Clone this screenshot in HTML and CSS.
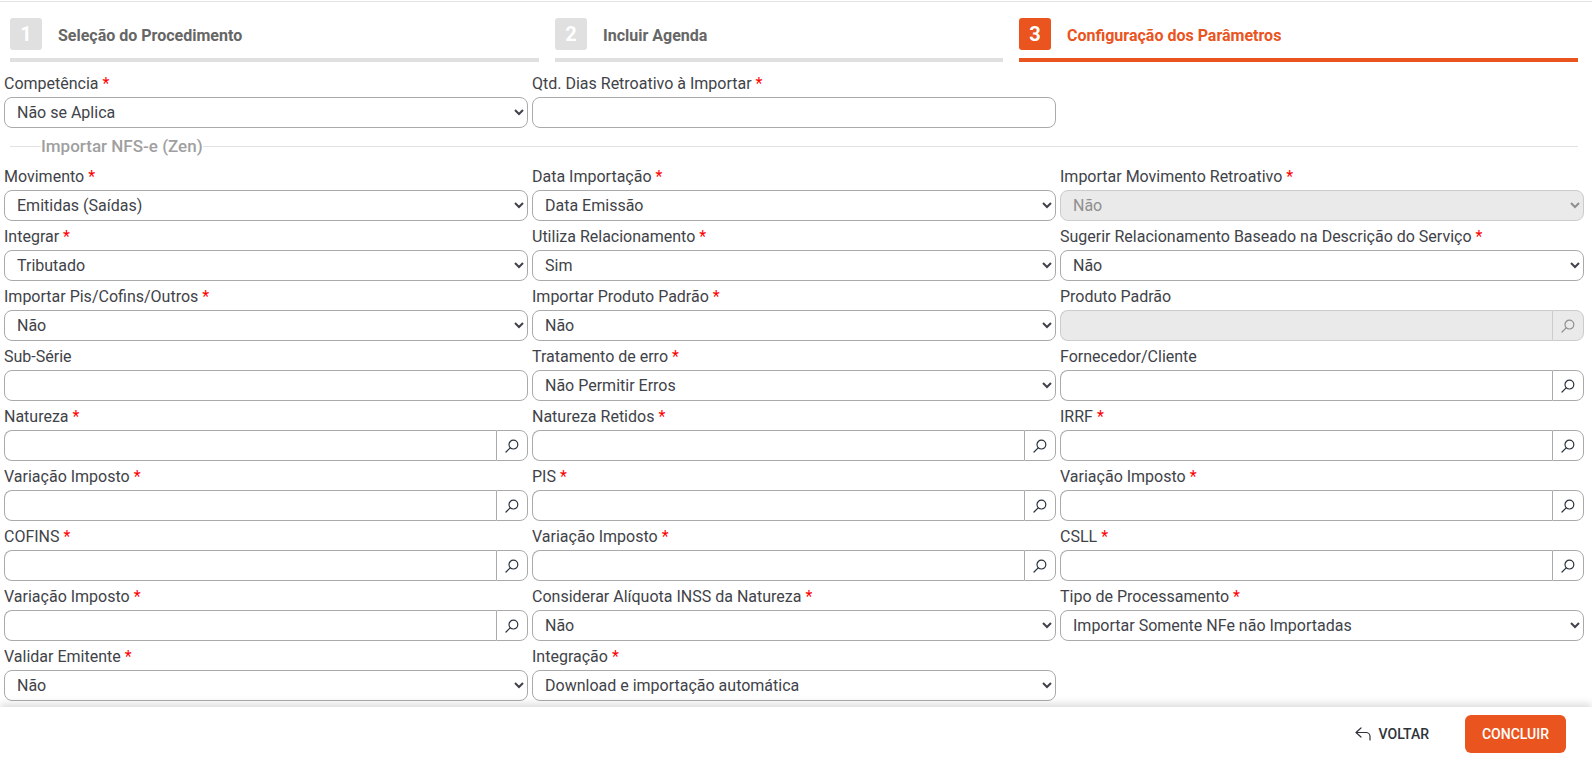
FILE: index.html
```html
<!DOCTYPE html>
<html lang="pt-BR">
<head>
<meta charset="utf-8">
<title>Configuração dos Parâmetros</title>
<link rel="stylesheet" href="styles.css">
</head>
<body>
<svg class="defs" width="0" height="0" aria-hidden="true"><defs>
<symbol id="lupa" viewBox="0 0 14 14"><circle cx="8.4" cy="5.6" r="4.4" fill="none" stroke="currentColor" stroke-width="1.2"/><path d="M5.2 8.8 1 13" fill="none" stroke="currentColor" stroke-width="1.2" stroke-linecap="round"/></symbol>
</defs></svg>
<div class="page">
  <main class="content">
    <nav class="steps">
      <div class="step"><span class="num">1</span><span class="title">Seleção do Procedimento</span></div>
      <div class="step"><span class="num">2</span><span class="title">Incluir Agenda</span></div>
      <div class="step active"><span class="num">3</span><span class="title">Configuração dos Parâmetros</span></div>
    </nav>
    <div class="grid first">
      <div class="field"><label>Competência <b>*</b></label><select><option>Não se Aplica</option></select></div>
      <div class="field"><label>Qtd. Dias Retroativo à Importar <b>*</b></label><input type="text"></div>
    </div>
    <div class="legend"><span>Importar NFS-e (Zen)</span></div>
    <div class="grid">
      <div class="field"><label>Movimento <b>*</b></label><select><option>Emitidas (Saídas)</option></select></div>
      <div class="field"><label>Data Importação <b>*</b></label><select><option>Data Emissão</option></select></div>
      <div class="field"><label>Importar Movimento Retroativo <b>*</b></label><select disabled><option>Não</option></select></div>

      <div class="field"><label>Integrar <b>*</b></label><select><option>Tributado</option></select></div>
      <div class="field"><label>Utiliza Relacionamento <b>*</b></label><select><option>Sim</option></select></div>
      <div class="field"><label>Sugerir Relacionamento Baseado na Descrição do Serviço <b>*</b></label><select><option>Não</option></select></div>

      <div class="field"><label>Importar Pis/Cofins/Outros <b>*</b></label><select><option>Não</option></select></div>
      <div class="field"><label>Importar Produto Padrão <b>*</b></label><select><option>Não</option></select></div>
      <div class="field"><label>Produto Padrão</label><div class="lookup off"><input type="text" disabled><button type="button" disabled><svg><use href="#lupa"/></svg></button></div></div>

      <div class="field"><label>Sub-Série</label><input type="text"></div>
      <div class="field"><label>Tratamento de erro <b>*</b></label><select><option>Não Permitir Erros</option></select></div>
      <div class="field"><label>Fornecedor/Cliente</label><div class="lookup"><input type="text"><button type="button"><svg><use href="#lupa"/></svg></button></div></div>

      <div class="field"><label>Natureza <b>*</b></label><div class="lookup"><input type="text"><button type="button"><svg><use href="#lupa"/></svg></button></div></div>
      <div class="field"><label>Natureza Retidos <b>*</b></label><div class="lookup"><input type="text"><button type="button"><svg><use href="#lupa"/></svg></button></div></div>
      <div class="field"><label>IRRF <b>*</b></label><div class="lookup"><input type="text"><button type="button"><svg><use href="#lupa"/></svg></button></div></div>

      <div class="field"><label>Variação Imposto <b>*</b></label><div class="lookup"><input type="text"><button type="button"><svg><use href="#lupa"/></svg></button></div></div>
      <div class="field"><label>PIS <b>*</b></label><div class="lookup"><input type="text"><button type="button"><svg><use href="#lupa"/></svg></button></div></div>
      <div class="field"><label>Variação Imposto <b>*</b></label><div class="lookup"><input type="text"><button type="button"><svg><use href="#lupa"/></svg></button></div></div>

      <div class="field"><label>COFINS <b>*</b></label><div class="lookup"><input type="text"><button type="button"><svg><use href="#lupa"/></svg></button></div></div>
      <div class="field"><label>Variação Imposto <b>*</b></label><div class="lookup"><input type="text"><button type="button"><svg><use href="#lupa"/></svg></button></div></div>
      <div class="field"><label>CSLL <b>*</b></label><div class="lookup"><input type="text"><button type="button"><svg><use href="#lupa"/></svg></button></div></div>

      <div class="field"><label>Variação Imposto <b>*</b></label><div class="lookup"><input type="text"><button type="button"><svg><use href="#lupa"/></svg></button></div></div>
      <div class="field"><label>Considerar Alíquota INSS da Natureza <b>*</b></label><select><option>Não</option></select></div>
      <div class="field"><label>Tipo de Processamento <b>*</b></label><select><option>Importar Somente NFe não Importadas</option></select></div>

      <div class="field"><label>Validar Emitente <b>*</b></label><select><option>Não</option></select></div>
      <div class="field"><label>Integração <b>*</b></label><select><option>Download e importação automática</option></select></div>
    </div>
  </main>
  <footer class="actions">
    <button type="button" class="back"><svg viewBox="0 0 16 14" width="16" height="14"><path d="M6 1 1 5.5 6 10M1 5.5h10a4 4 0 0 1 4 4V13" fill="none" stroke="currentColor" stroke-width="1.2" stroke-linecap="round" stroke-linejoin="round"/></svg>VOLTAR</button>
    <button type="button" class="done">CONCLUIR</button>
  </footer>
</div>
</body>
</html>
```
FILE: styles.css
```css
* { box-sizing: border-box; }
html, body { margin: 0; height: 100%; background: #fff; overflow: hidden; }
body { font-family: Roboto, "Liberation Sans", sans-serif; color: #3f4349; }
.defs { position: absolute; }
.page { height: 760px; display: flex; flex-direction: column; padding-top: 1px; }
.content { flex: 1; min-height: 0; overflow: hidden; border-top: 1px solid #e3e3e3; padding: 16px 8px 0 4px; }
.steps { display: grid; grid-template-columns: 529fr 448fr 559fr; column-gap: 16px; margin: 0 6px 11px 6px; }
.step { display: flex; align-items: center; gap: 16px; height: 44px; padding-bottom: 8px; border-bottom: 4px solid #e0e0e0; color: #666; }
.num { width: 32px; height: 32px; border-radius: 3px; background: #e0e0e0; color: #fff; font-size: 20px; font-weight: 700; display: flex; align-items: center; justify-content: center; }
.title { padding-top: 2px; font-size: 16px; font-weight: 700; }
.step.active { border-color: #ea541e; color: #ea541e; }
.step.active .num { background: #ea541e; }
.grid { display: grid; grid-template-columns: repeat(3, 1fr); column-gap: 4px; row-gap: 5px; }
.field { display: flex; flex-direction: column; min-width: 0; }
label { height: 22px; margin-bottom: 2px; font-size: 16px; line-height: 22px; color: #3f4349; white-space: nowrap; }
label b { color: #f00; font-weight: 400; }
select, input { width: 100%; height: 31px; border: 1px solid #aaa; border-radius: 8px; background: #fff; font: 16px Roboto, "Liberation Sans", sans-serif; color: #3f4349; outline: 0; }
select { padding: 0 0 0 8px; }
select:disabled { background: #eaeaea; border-color: #ccc; color: #8f8f8f; opacity: 1; }
.legend { display: flex; align-items: center; height: 38px; margin: 0 6px; padding-bottom: 2px; font-size: 17px; font-weight: 500; color: #a0a0a0; }
.legend::before { content: ""; width: 31px; height: 1px; background: #e2e2e2; }
.legend::after { content: ""; flex: 1; height: 1px; background: #e2e2e2; }
.lookup { display: flex; height: 31px; }
.lookup input { flex: 1; min-width: 0; border-right: 0; border-radius: 8px 0 0 8px; }
.lookup button { width: 32px; flex: none; display: flex; align-items: center; justify-content: center; padding: 0; border: 1px solid #aaa; border-radius: 0 8px 8px 0; background: #fff; color: #2b3440; }
.lookup svg { width: 14px; height: 14px; }
.lookup.off input { background: #eaeaea; border-color: #ccc; }
.lookup.off button { background: #eaeaea; border-color: #ccc; color: #8f8f8f; }
.actions { position: relative; flex: none; height: 53px; display: flex; align-items: center; justify-content: flex-end; gap: 36px; padding-right: 26px; background: #fff; box-shadow: 0 -3px 8px rgba(0,0,0,.14); }
.actions button { font: 500 14px Roboto, "Liberation Sans", sans-serif; border: 0; cursor: pointer; }
.back { display: flex; align-items: center; gap: 8px; padding: 0; background: none; color: #2f3338; }
.done { width: 101px; height: 38px; border-radius: 6px; background: #ea541e; color: #fff; }
```
